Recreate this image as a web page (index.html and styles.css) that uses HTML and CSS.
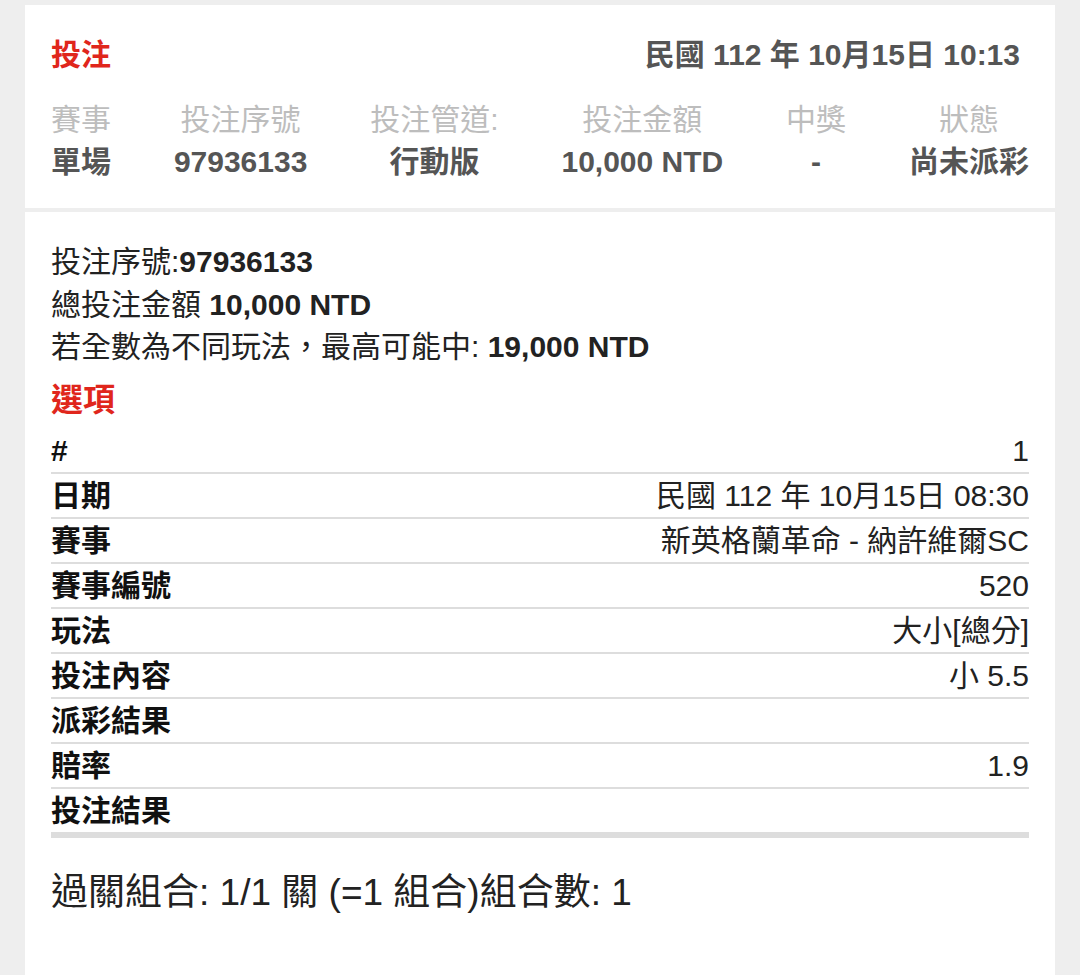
FILE: index.html
```html
<!DOCTYPE html>
<html lang="zh-Hant">
<head>
    <meta charset="UTF-8">
    <meta name="viewport" content="width=device-width, initial-scale=1.0">
    <title>投注詳情</title>
    <link rel="stylesheet" href="styles.css">
</head>
<body>
    <div class="page">
        <div class="card summary">
            <div class="summary-top">
                <h1 class="title">投注</h1>
                <span class="bet-time">民國 112 年 10月15日 10:13</span>
            </div>
            <div class="summary-cols">
                <div class="col">
                    <span class="col-label">賽事</span>
                    <span class="col-value">單場</span>
                </div>
                <div class="col">
                    <span class="col-label">投注序號</span>
                    <span class="col-value">97936133</span>
                </div>
                <div class="col">
                    <span class="col-label">投注管道:</span>
                    <span class="col-value">行動版</span>
                </div>
                <div class="col">
                    <span class="col-label">投注金額</span>
                    <span class="col-value">10,000 NTD</span>
                </div>
                <div class="col">
                    <span class="col-label">中獎</span>
                    <span class="col-value">-</span>
                </div>
                <div class="col">
                    <span class="col-label">狀態</span>
                    <span class="col-value">尚未派彩</span>
                </div>
            </div>
        </div>

        <div class="card detail">
            <p class="info">投注序號:<b>97936133</b></p>
            <p class="info">總投注金額 <b>10,000 NTD</b></p>
            <p class="info">若全數為不同玩法，最高可能中: <b>19,000 NTD</b></p>

            <h2 class="section-title">選項</h2>

            <table class="options">
                <tr><th>#</th><td>1</td></tr>
                <tr><th>日期</th><td>民國 112 年 10月15日 08:30</td></tr>
                <tr><th>賽事</th><td>新英格蘭革命 - 納許維爾SC</td></tr>
                <tr><th>賽事編號</th><td>520</td></tr>
                <tr><th>玩法</th><td>大小[總分]</td></tr>
                <tr><th>投注內容</th><td>小 5.5</td></tr>
                <tr><th>派彩結果</th><td></td></tr>
                <tr><th>賠率</th><td>1.9</td></tr>
                <tr class="last"><th>投注結果</th><td></td></tr>
            </table>

            <p class="combo">過關組合: 1/1 關 (=1 組合)組合數: 1</p>
        </div>
    </div>
</body>
</html>
```

FILE: styles.css
```css
body {
    margin: 0;
    background-color: #eeeeee;
    font-family: "Liberation Sans", "Noto Sans CJK TC", sans-serif;
    color: #222;
}

.page {
    padding: 5px 25px 0;
}

.card {
    background: white;
    padding: 0 26px;
}

.summary {
    padding-top: 27px;
    padding-bottom: 25px;
    margin-bottom: 4px;
}

.summary-top {
    display: flex;
    justify-content: space-between;
    align-items: center;
    height: 40px;
    margin-bottom: 27px;
}

.title {
    margin: 0;
    font-size: 30px;
    font-weight: bold;
    color: #e0261c;
}

.bet-time {
    font-size: 30px;
    font-weight: bold;
    color: #555;
    padding-right: 9px;
}

.summary-cols {
    display: flex;
    justify-content: space-between;
}

.col {
    display: flex;
    flex-direction: column;
    align-items: center;
    line-height: 42px;
}

.col-label {
    font-size: 30px;
    color: #bdbdbd;
}

.col-value {
    font-size: 30px;
    font-weight: bold;
    color: #555;
}

.detail {
    padding-top: 29px;
    padding-bottom: 90px;
}

.info {
    margin: 0;
    font-size: 30px;
    line-height: 42.5px;
}

.section-title {
    margin: 6px 0 4px;
    font-size: 32px;
    line-height: 50px;
    color: #e0261c;
}

.options {
    width: 100%;
    border-collapse: collapse;
}

.options tr {
    border-bottom: 2px solid #dddddd;
}

.options tr.last {
    border-bottom: 6px solid #dddddd;
}

.options th,
.options td {
    height: 43px;
    padding: 0;
    font-size: 30px;
    line-height: 43px;
}

.options th {
    text-align: left;
    color: #111;
}

.options td {
    text-align: right;
    color: #222;
}

.combo {
    margin: 30px 0 0;
    font-size: 37px;
    line-height: 50px;
}
```
